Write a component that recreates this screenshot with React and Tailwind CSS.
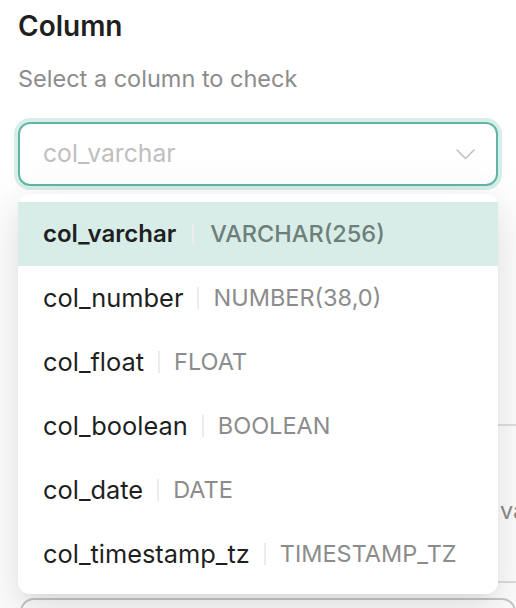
const columns = [
  { name: 'col_varchar', type: 'VARCHAR(256)' },
  { name: 'col_number', type: 'NUMBER(38,0)' },
  { name: 'col_float', type: 'FLOAT' },
  { name: 'col_boolean', type: 'BOOLEAN' },
  { name: 'col_date', type: 'DATE' },
  { name: 'col_timestamp_tz', type: 'TIMESTAMP_TZ' },
]

export default function App() {
  const selected = 'col_varchar'

  return (
    <div className="relative w-[516px] h-[608px] overflow-hidden bg-white font-['Inter',sans-serif]">
      <div className="px-[18px] pt-[8px]">
        <h2 className="text-[28px] leading-[36px] font-semibold text-[#1f1f1f]">Column</h2>
        <p className="mt-[20px] text-[23.5px] leading-[30px] text-[#8c8c8c]">Select a column to check</p>

        {/* Select trigger */}
        <div className="mt-[28px] rounded-[12px] ring-4 ring-[#d9eeea]">
          <div className="h-[64px] flex items-center justify-between rounded-[12px] border-2 border-[#5cb8a5] bg-white pl-[23px] pr-[21px]">
            <span className="text-[24.7px] text-[#bfbfbf]">col_varchar</span>
            <svg width="19" height="11" viewBox="0 0 19 11" fill="none" stroke="#bfbfbf" strokeWidth="1.5" strokeLinecap="round" strokeLinejoin="round">
              <polyline points="1,1 9.5,9.5 18,1" />
            </svg>
          </div>
        </div>
      </div>

      {/* Content behind the dropdown */}
      <div className="mt-[238px] ml-[18px] border-t-2 border-[#e0e0e0]">
        <div className="h-[155px] flex items-center pl-[482px] pt-[14px]">
          <span className="text-[23.5px] text-[#8c8c8c] whitespace-nowrap">va</span>
        </div>
        <div className="border-t-2 border-[#e0e0e0]" />
      </div>
      <div className="mt-[15px] ml-[20px] h-[60px] rounded-[14px] border-2 border-[#c9c9c9]" />

      {/* Dropdown menu */}
      <div className="absolute left-[18px] top-[194px] w-[480px] rounded-[12px] bg-white py-[8px] shadow-[0_12px_32px_rgba(0,0,0,0.08),0_6px_12px_-8px_rgba(0,0,0,0.12),0_18px_56px_16px_rgba(0,0,0,0.05)]">
        {columns.map((col) => {
          const active = col.name === selected
          return (
            <div
              key={col.name}
              className={`h-[64px] flex items-center pl-[25px] ${active ? 'bg-[#d8ede8]' : ''}`}
            >
              <span className={active ? 'text-[24px] font-semibold text-[#1f1f1f]' : 'text-[25.4px] text-[#1f1f1f]'}>{col.name}</span>
              <span className={`h-[22px] w-[2px] bg-[#ececec] ${active ? 'mx-[16px]' : 'mx-[14px]'}`} />
              <span className={active ? 'text-[23.5px] font-medium text-[#6e7f7a]' : 'text-[23.5px] text-[#8c8c8c]'}>{col.type}</span>
            </div>
          )
        })}
      </div>
    </div>
  )
}
